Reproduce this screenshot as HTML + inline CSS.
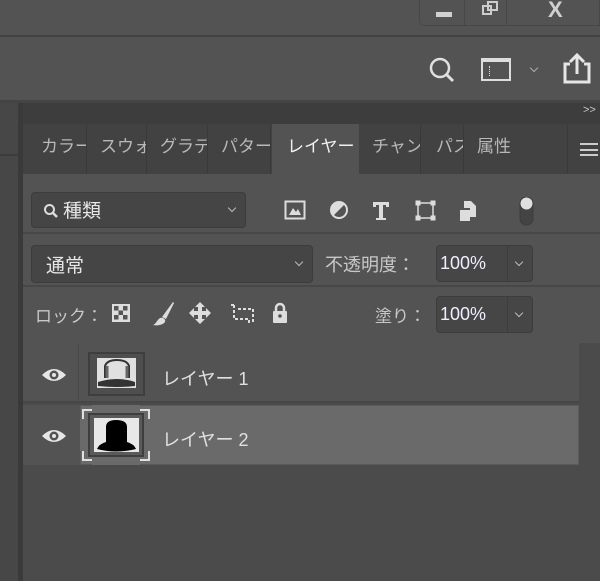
<!DOCTYPE html>
<html><head><meta charset="utf-8"><style>
*{margin:0;padding:0;box-sizing:border-box}
body{width:600px;height:581px;overflow:hidden;background:#535353;position:relative;font-family:"Liberation Sans","Noto Sans CJK JP",sans-serif;color:#d8d8d8}
.a{position:absolute}
.tab{position:absolute;top:124px;height:50px;background:#424242;border-right:1px solid #393939;font-size:17px;color:#b8b8b8;line-height:46px;padding-left:12px;overflow:hidden;white-space:nowrap}
.box{position:absolute;background:#454545;border:1px solid #3c3c3c;border-radius:4px}
.chev{position:absolute;width:7px;height:7px;border-right:1.3px solid #bbb;border-bottom:1.3px solid #bbb;transform:rotate(45deg)}
</style></head><body>
<div class="a" style="left:0;top:0;width:600px;height:37px;background:#535353;border-bottom:2px solid #424242"></div>
<div class="a" style="left:419px;top:0;width:181px;height:26px;border:1px solid #474747;border-top:none;border-radius:0 0 0 5px"></div>
<div class="a" style="left:464px;top:0;width:1px;height:25px;background:#474747"></div>
<div class="a" style="left:506px;top:0;width:1px;height:25px;background:#474747"></div>
<div class="a" style="left:436px;top:12px;width:16px;height:5px;background:#d0d0d0"></div>
<div class="a" style="left:482px;top:5px;width:10px;height:10px;border:2px solid #ccc"></div>
<div class="a" style="left:487px;top:1px;width:11px;height:10px;border:2px solid #ccc"></div>
<div class="a" style="left:548px;top:-3px;font-size:22px;color:#d0d0d0;font-weight:bold">X</div>
<svg class="a" style="left:428px;top:56px" width="30" height="30"><circle cx="12" cy="12" r="9" stroke="#e0e0e0" stroke-width="2.5" fill="none"/><line x1="18.5" y1="18.5" x2="25" y2="25" stroke="#e0e0e0" stroke-width="3"/></svg>
<div class="a" style="left:481px;top:58px;width:30px;height:23px;border:2px solid #ddd;border-top-width:4px"></div>
<div class="a" style="left:486px;top:66px;width:4px;height:10px;border-right:1px dotted #ddd"></div>
<div class="chev" style="left:531px;top:65px;width:6px;height:6px;border-color:#aaa;border-width:1px"></div>
<svg class="a" style="left:562px;top:52px" width="30" height="32"><path d="M8 12H3V30H27V12H22" stroke="#e6e6e6" stroke-width="3" fill="none"/><path d="M15 22V3M8 10L15 3L22 10" stroke="#e6e6e6" stroke-width="3" fill="none"/></svg>
<div class="a" style="left:0;top:100px;width:600px;height:3px;background:#444"></div>
<div class="a" style="left:0;top:103px;width:18px;height:478px;background:#474747"></div>
<div class="a" style="left:0;top:154px;width:18px;height:2px;background:#3c3c3c"></div>
<div class="a" style="left:18px;top:103px;width:5px;height:478px;background:#3a3a3a"></div>
<div class="a" style="left:23px;top:103px;width:577px;height:21px;background:#3d3d3d"></div>
<div class="a" style="left:583px;top:104px;font-size:11px;color:#ccc">&gt;&gt;</div>
<div class="a" style="left:23px;top:124px;width:577px;height:50px;background:#424242"></div>
<div class="tab" style="left:28px;width:59px;padding-left:13px">カラー</div>
<div class="tab" style="left:88px;width:59px">スウォ</div>
<div class="tab" style="left:148px;width:60px">グラデ</div>
<div class="tab" style="left:209px;width:62px">パター</div>
<div class="tab" style="left:272px;width:87px;background:#535353;color:#f0f0f0;border:none;padding-left:15px">レイヤー</div>
<div class="tab" style="left:360px;width:61px">チャン</div>
<div class="tab" style="left:422px;width:42px;padding-left:14px">パス</div>
<div class="tab" style="left:465px;width:103px">属性</div>
<div class="a" style="left:580px;top:143px;width:18px;height:13px;border-top:2px solid #ccc;border-bottom:2px solid #ccc"></div>
<div class="a" style="left:580px;top:149px;width:18px;height:2px;background:#ccc"></div>
<div class="a" style="left:23px;top:174px;width:577px;height:169px;background:#535353"></div>
<div class="box" style="left:31px;top:192px;width:215px;height:36px"></div>
<svg class="a" style="left:43px;top:203px" width="16" height="16"><circle cx="6.5" cy="6.5" r="4.5" stroke="#ddd" stroke-width="2" fill="none"/><line x1="10" y1="10" x2="14" y2="14" stroke="#ddd" stroke-width="2.5"/></svg>
<div class="a" style="left:63px;top:196px;font-size:19px;color:#e8e8e8">種類</div>
<div class="chev" style="left:229px;top:205px;width:6px;height:6px;border-width:1px"></div>
<svg class="a" style="left:284px;top:197px" width="250" height="30">
<rect x="1.5" y="4.5" width="19" height="17" fill="none" stroke="#ddd" stroke-width="2"/><path d="M5 18L9 11L12 15L14 12L17 18Z" fill="#ddd"/>
<circle cx="55" cy="13" r="8" fill="none" stroke="#ddd" stroke-width="2"/><path d="M49 19A8 8 0 0 1 61 7Z" fill="#ddd"/>
<path d="M89 5H105V10H102V8H99V21H102V23H92V21H95V8H92V10H89Z" fill="#ddd"/>
<rect x="134" y="6" width="15" height="15" fill="none" stroke="#ddd" stroke-width="1.5"/><rect x="131.5" y="3.5" width="5" height="5" fill="#ddd"/><rect x="146.5" y="3.5" width="5" height="5" fill="#ddd"/><rect x="131.5" y="18.5" width="5" height="5" fill="#ddd"/><rect x="146.5" y="18.5" width="5" height="5" fill="#ddd"/>
<path d="M180 4H187L192 9V20H186V11H180Z" fill="#ddd"/><rect x="176" y="13" width="10" height="11" fill="#ddd"/>
<rect x="236" y="0" width="13" height="28" rx="6.5" fill="#444" stroke="#3c3c3c"/><circle cx="242.5" cy="6.5" r="6" fill="#e0e0e0"/>
</svg>
<div class="a" style="left:23px;top:232px;width:577px;height:2px;background:#474747"></div>
<div class="box" style="left:31px;top:245px;width:282px;height:38px"></div>
<div class="a" style="left:46px;top:251px;font-size:19px;color:#e6e6e6">通常</div>
<div class="chev" style="left:296px;top:259px;width:6px;height:6px;border-width:1px"></div>
<div class="a" style="left:325px;top:251px;font-size:18px;color:#c8c8c8">不透明度：</div>
<div class="box" style="left:436px;top:245px;width:97px;height:37px;background:#464646"></div>
<div class="a" style="left:507px;top:246px;width:1px;height:35px;background:#3c3c3c"></div>
<div class="a" style="left:440px;top:253px;font-size:18px;color:#eef">100%</div>
<div class="chev" style="left:516px;top:259px;width:6px;height:6px;border-width:1px"></div>
<div class="a" style="left:23px;top:285px;width:577px;height:2px;background:#474747"></div>
<div class="a" style="left:35px;top:302px;font-size:17px;color:#c8c8c8">ロック：</div>
<svg class="a" style="left:110px;top:300px" width="190" height="28">
<rect x="2" y="4" width="18" height="18" fill="#ddd"/><rect x="4" y="6" width="4.5" height="4.5" fill="#555"/><rect x="13" y="6" width="4.5" height="4.5" fill="#555"/><rect x="8.5" y="10.5" width="4.5" height="4.5" fill="#555"/><rect x="4" y="15" width="4.5" height="4.5" fill="#555"/><rect x="13" y="15" width="4.5" height="4.5" fill="#555"/>
<path d="M63 2L52 17L56 19L64 3Z" fill="#ddd"/><path d="M50 18C53 17 56 19 55 22C53 25 47 26 43 25C46 24 47 20 50 18Z" fill="#ddd"/>
<path d="M90 2L95 7H92V11H96V8L101 13L96 18V15H92V19H95L90 24L85 19H88V15H84V18L79 13L84 8V11H88V7H85Z" fill="#ddd"/>
<path d="M124 5V19H139V24M124 5H119M128 9H143V22" stroke="#ddd" stroke-width="2" fill="none" stroke-dasharray="3 2"/>
<rect x="163" y="11" width="14" height="12" rx="1" fill="#ddd"/><path d="M166 11V8A4 4 0 0 1 174 8V11" stroke="#ddd" stroke-width="2.5" fill="none"/><circle cx="170" cy="16" r="1.8" fill="#555"/>
</svg>
<div class="a" style="left:375px;top:302px;font-size:17px;color:#c8c8c8">塗り：</div>
<div class="box" style="left:436px;top:296px;width:97px;height:37px;background:#464646"></div>
<div class="a" style="left:507px;top:297px;width:1px;height:35px;background:#3c3c3c"></div>
<div class="a" style="left:440px;top:304px;font-size:18px;color:#eef">100%</div>
<div class="chev" style="left:516px;top:310px;width:6px;height:6px;border-width:1px"></div>
<div class="a" style="left:23px;top:343px;width:577px;height:238px;background:#4b4b4b"></div>
<div class="a" style="left:23px;top:343px;width:556px;height:60px;background:#535353;border-bottom:2px solid #474747"></div>
<div class="a" style="left:78px;top:343px;width:1px;height:60px;background:#4a4a4a"></div>
<div class="a" style="left:23px;top:405px;width:57px;height:60px;background:#535353"></div>
<div class="a" style="left:80px;top:405px;width:499px;height:60px;background:#6a6a6a;border:1px solid #5a5a5a"></div>
<svg class="a" style="left:40px;top:364px" width="30" height="90"><path d="M2 11Q14 -1 26 11Q14 23 2 11Z" fill="#e6e6e6"/><circle cx="14" cy="11" r="4.5" fill="#535353"/><circle cx="14" cy="11" r="2" fill="#e6e6e6"/>
<path d="M2 72Q14 60 26 72Q14 84 2 72Z" fill="#e6e6e6"/><circle cx="14" cy="72" r="4.5" fill="#535353"/><circle cx="14" cy="72" r="2" fill="#e6e6e6"/></svg>
<div class="a" style="left:88px;top:352px;width:57px;height:44px;border:2px solid #3e3e3e;background:#4e4e4e"></div>
<div class="a" style="left:97px;top:358px;width:39px;height:30px;background:#e0e0e0"></div>
<svg class="a" style="left:97px;top:358px" width="39" height="30"><path d="M8 20V8Q10 2 20 2Q30 2 32 8V20" stroke="#333" stroke-width="2" fill="none"/><path d="M1 24Q20 18 38 24V28Q20 30 1 28Z" fill="#333"/><path d="M10 8V20M30 8V20" stroke="#666" stroke-width="3"/></svg>
<div class="a" style="left:162px;top:365px;font-size:18px;color:#e0e0e0">レイヤー 1</div>
<div class="a" style="left:82px;top:409px;width:68px;height:52px;border:2px solid #e0e0e0;"></div>
<div class="a" style="left:92px;top:405px;width:48px;height:60px;background:#6a6a6a"></div>
<div class="a" style="left:80px;top:419px;width:72px;height:32px;background:#6a6a6a"></div>
<div class="a" style="left:88px;top:413px;width:56px;height:44px;border:2px solid #3e3e3e;background:#5a5a5a"></div>
<div class="a" style="left:94px;top:418px;width:45px;height:34px;background:#e8e8e8"></div>
<svg class="a" style="left:94px;top:418px" width="45" height="34"><path d="M12 24V9Q12 2 22 2Q33 2 33 9V24Q40 26 42 31Q22 36 3 31Q5 26 12 24Z" fill="#000"/></svg>
<div class="a" style="left:162px;top:426px;font-size:18px;color:#e0e0e0">レイヤー 2</div>
</body></html>
